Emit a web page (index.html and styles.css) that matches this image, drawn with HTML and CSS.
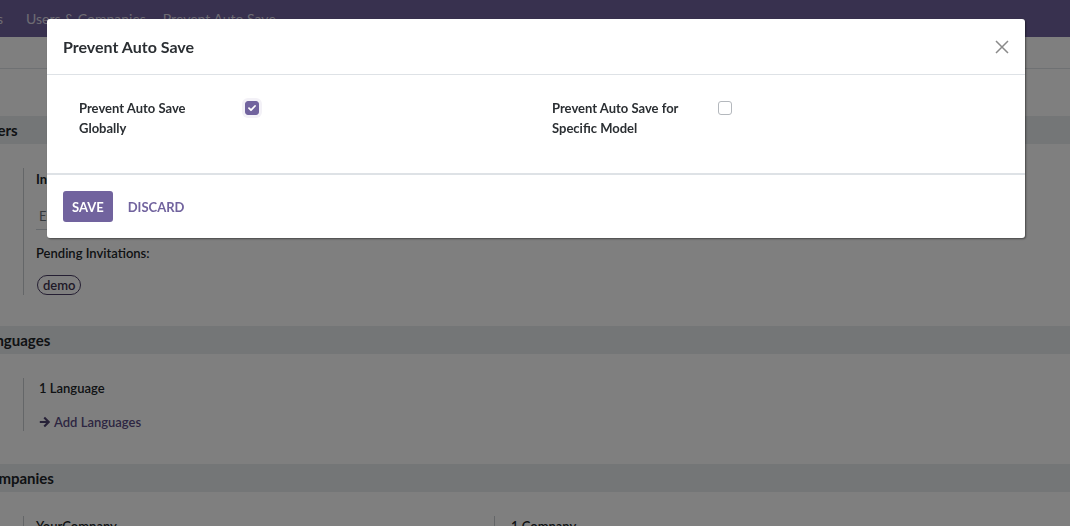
FILE: index.html
```html
<!DOCTYPE html>
<html lang="en">
<head>
<meta charset="utf-8">
<title>Prevent Auto Save</title>
<link rel="stylesheet" href="styles.css">
</head>
<body>
<div class="page">
  <nav class="navbar">
    <span class="nav-item nav-first">Settings</span>
    <span class="nav-item">Users &amp; Companies</span>
    <span class="nav-item">Prevent Auto Save</span>
  </nav>
  <div class="control-panel"></div>
  <div class="spacer"></div>

  <h2 class="section-title">Users</h2>
  <div class="section-body users">
    <div class="setting">
      <div class="setting-label">Invite New Users</div>
      <div class="invite-input">Enter e-mail address</div>
      <div class="setting-sub">Pending Invitations:</div>
      <div><span class="badge">demo</span></div>
    </div>
  </div>

  <h2 class="section-title">Languages</h2>
  <div class="section-body languages">
    <div class="setting">
      <div class="setting-text">1 Language</div>
      <div class="setting-link"><svg class="arrow" width="12" height="12" viewBox="0 0 12 12"><path d="M6 0.8 L11.2 6 L6 11.2 L4.5 9.7 L7.1 7.1 L0.8 7.1 L0.8 4.9 L7.1 4.9 L4.5 2.3 Z" fill="#4f4470"/></svg> Add Languages</div>
    </div>
  </div>

  <h2 class="section-title">Companies</h2>
  <div class="section-body companies">
    <div class="setting col-a"><div class="setting-text">YourCompany</div></div>
    <div class="setting col-b"><div class="setting-text">1 Company</div></div>
  </div>
</div>

<div class="backdrop"></div>

<div class="modal" role="dialog">
  <header class="modal-header">
    <h4 class="modal-title">Prevent Auto Save</h4>
    <button class="close" aria-label="Close">
      <svg width="14" height="14" viewBox="0 0 14 14"><path d="M1 1 L13 13 M13 1 L1 13" stroke="#8a8a8a" stroke-width="1.5" fill="none"/></svg>
    </button>
  </header>
  <div class="modal-body">
    <div class="field">
      <label class="field-label">Prevent Auto Save Globally</label>
      <span class="checkbox checked">
        <svg width="14" height="14" viewBox="0 0 14 14"><path d="M4 7.2 L6 9.2 L10 5" stroke="#fff" stroke-width="1.8" fill="none" stroke-linecap="round" stroke-linejoin="round"/></svg>
      </span>
    </div>
    <div class="field">
      <label class="field-label">Prevent Auto Save for Specific Model</label>
      <span class="checkbox"></span>
    </div>
  </div>
  <footer class="modal-footer">
    <button class="btn btn-primary">Save</button>
    <button class="btn btn-link">Discard</button>
  </footer>
</div>
</body>
</html>
```
FILE: styles.css
```css
html, body {
  margin: 0;
  padding: 0;
}
body {
  font-family: "Lato", "Noto Sans", sans-serif;
  color: #212529;
  background: #fff;
  overflow: hidden;
  height: 526px;
}
.page {
  width: 1070px;
}
.navbar {
  height: 37px;
  background: #71639e;
  display: flex;
  align-items: center;
  gap: 13px;
  font-size: 14px;
  color: #dcd8e6;
  white-space: nowrap;
}
.nav-item {
  padding: 0 2px;
}
.nav-first {
  margin-left: -48px;
  margin-right: 6px;
}
.control-panel {
  height: 31px;
  border-bottom: 1px solid #dee2e6;
}
.spacer {
  height: 47px;
}
.section-title {
  margin: 0;
  height: 28px;
  line-height: 28px;
  background: #e9ecef;
  font-size: 15px;
  font-weight: 700;
  color: #212529;
  text-indent: -20px;
}
.section-body {
  display: flex;
  padding-left: 23px;
}
.setting {
  border-left: 1px solid #c9ccd0;
  padding-left: 12px;
  font-size: 13px;
}
.users {
  padding-top: 24px;
  padding-bottom: 31px;
}
.setting-label {
  font-weight: 700;
  line-height: 18px;
  padding-top: 2px;
}
.invite-input {
  margin-top: 20px;
  width: 260px;
  border-bottom: 1px solid #ced4da;
  color: #6c757d;
  padding: 0 0 5px 3px;
  line-height: 16px;
}
.setting-sub {
  margin-top: 14px;
  font-weight: 600;
  line-height: 18px;
}
.badge {
  display: inline-block;
  margin-top: 13px;
  margin-left: 1px;
  border: 1px solid #4b3f66;
  border-radius: 10px;
  padding: 0 5px;
  line-height: 18px;
  color: #3e3450;
  font-weight: 600;
}
.languages {
  padding-top: 24px;
  padding-bottom: 33px;
}
.languages .setting {
  padding-left: 15px;
  height: 53px;
}
.setting-text {
  line-height: 18px;
  padding-top: 1px;
  font-weight: 600;
}
.setting-link {
  margin-top: 16px;
  line-height: 18px;
  color: #5b4d84;
  font-weight: 600;
  display: flex;
  align-items: center;
  gap: 3px;
}
.companies {
  padding-top: 24px;
}
.companies .setting {
  height: 20px;
}
.col-a {
  width: 458px;
}
.col-b {
  padding-left: 16px;
}

.backdrop {
  position: fixed;
  inset: 0;
  background: rgba(0, 0, 0, 0.5);
}
.modal {
  position: fixed;
  top: 19px;
  left: 47px;
  width: 978px;
  background: #fff;
  border-radius: 3px;
  box-shadow: 1px 1px 2px rgba(0, 0, 0, 0.45);
}
.modal-header {
  height: 56px;
  box-sizing: border-box;
  border-bottom: 1px solid #dee2e6;
  display: flex;
  align-items: center;
  justify-content: space-between;
  padding: 0 16px;
}
.modal-title {
  margin: 0;
  font-size: 16px;
  font-weight: 700;
  color: #2b2f33;
  padding-top: 0;
}
.close {
  border: 0;
  background: none;
  padding: 0;
  width: 14px;
  height: 14px;
  display: flex;
}
.modal-body {
  display: grid;
  grid-template-columns: 1fr 1fr;
  padding: 23px 16px 35px;
}
.field {
  display: flex;
  align-items: flex-start;
  padding-left: 16px;
}
.field-label {
  width: 150px;
  margin-right: 16px;
  font-size: 13px;
  font-weight: 700;
  line-height: 20px;
  color: #2b2f33;
}
.checkbox {
  width: 14px;
  height: 14px;
  box-sizing: border-box;
  margin-top: 3px;
  border: 1px solid #b4b8bd;
  border-radius: 3px;
  background: #fff;
  display: flex;
}
.checkbox.checked {
  background: #71639e;
  border-color: #71639e;
  box-shadow: 0 0 0 3px #f3f1f7;
}
.checkbox.checked svg {
  margin: -1px;
}
.modal-footer {
  border-top: 2px solid #dee2e6;
  display: flex;
  align-items: center;
  gap: 6px;
  padding: 16px;
}
.btn {
  font-family: inherit;
  font-size: 13px;
  font-weight: 700;
  text-transform: uppercase;
  border: 0;
  border-radius: 3px;
  height: 31px;
  padding: 0 9px;
  cursor: pointer;
}
.btn-primary {
  background: #71639e;
  color: #fff;
}
.btn-link {
  background: none;
  color: #71639e;
}
```
